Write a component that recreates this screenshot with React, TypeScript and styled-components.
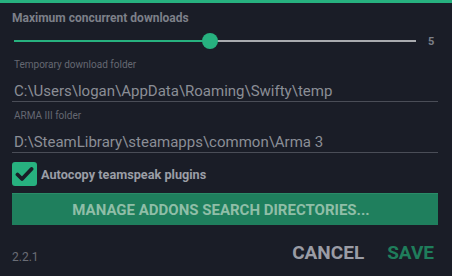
import React, { useState } from 'react';
import styled, { createGlobalStyle } from 'styled-components';

const GlobalStyle = createGlobalStyle`
  html, body {
    margin: 0;
    padding: 0;
    background: #1a1d27;
  }

  body {
    font-family: Roboto, "Liberation Sans", sans-serif;
  }
`;

// slider scale
const MIN = 1;
const MAX = 9.2;

export default function App() {
  const [downloads] = useState(5);
  const [autocopy] = useState(true);
  const percent = ((downloads - MIN) / (MAX - MIN)) * 100;

  return (
    <>
      <GlobalStyle />
      <Settings>
        <SectionTitle>Maximum concurrent downloads</SectionTitle>

        <SliderRow>
          <Track>
            <TrackFill style={ { width: percent + '%' } } />
            <Thumb style={ { left: percent + '%' } } />
          </Track>
          <SliderValue>{ downloads }</SliderValue>
        </SliderRow>

        <FieldLabel>Temporary download folder</FieldLabel>
        <FieldInput>C:\Users\logan\AppData\Roaming\Swifty\temp</FieldInput>

        <FieldLabel $gap={ 8 }>ARMA III folder</FieldLabel>
        <FieldInput>D:\SteamLibrary\steamapps\common\Arma 3</FieldInput>

        <CheckRow>
          <CheckBox $checked={ autocopy }>
            { autocopy && (
              <svg width="19" height="16" viewBox="0 0 19 16">
                <path d="M2.5 8.5 L7 13 L16.5 3" fill="none" stroke="#1a1d27" strokeWidth="3.8" strokeLinecap="round" strokeLinejoin="round" />
              </svg>
            ) }
          </CheckBox>
          <CheckLabel>Autocopy teamspeak plugins</CheckLabel>
        </CheckRow>

        <WideButton>Manage addons search directories...</WideButton>

        <Footer>
          <Version>2.2.1</Version>
          <Actions>
            <TextButton>Cancel</TextButton>
            <TextButton $primary>Save</TextButton>
          </Actions>
        </Footer>
      </Settings>
    </>
  );
}

const Settings = styled.div`
  border-top: 3px solid #27b17f;
  padding: 8px 14px 0 12px;
  box-sizing: border-box;
  height: 276px;
  display: flex;
  flex-direction: column;
`;

const SectionTitle = styled.div`
  font-size: 12px;
  font-weight: 700;
  line-height: 14px;
  color: #7d8089;
`;

const SliderRow = styled.div`
  display: flex;
  align-items: center;
  height: 16px;
  margin-top: 8px;
  padding-left: 2px;
`;

const Track = styled.div`
  position: relative;
  flex: 1;
  height: 2px;
  background: #a9abaf;
`;

const TrackFill = styled.div`
  height: 100%;
  background: #27b17f;
`;

const Thumb = styled.div`
  position: absolute;
  top: 50%;
  width: 16px;
  height: 16px;
  border-radius: 50%;
  background: #27b17f;
  transform: translate(-50%, -50%);
`;

const SliderValue = styled.span`
  width: 10px;
  padding-left: 12px;
  font-size: 11px;
  font-weight: 700;
  color: #7d8089;
`;

const FieldLabel = styled.div<{ $gap?: number }>`
  margin-top: ${ p => p.$gap ?? 10 }px;
  padding-left: 2px;
  font-size: 10px;
  line-height: 12px;
  color: #656872;
`;

const FieldInput = styled.div`
  margin-top: 10px;
  height: 20px;
  padding-left: 2px;
  line-height: 20px;
  font-size: 15px;
  color: #8b8e96;
  border-bottom: 1px solid #4a4d57;
  white-space: nowrap;
`;

const CheckRow = styled.div`
  display: flex;
  align-items: center;
  gap: 4px;
  margin-top: 9px;
  height: 24px;
`;

const CheckBox = styled.div<{ $checked: boolean }>`
  width: 25px;
  height: 24px;
  border-radius: 3px;
  background: ${ p => p.$checked ? '#27b17f' : 'transparent' };
  border: ${ p => p.$checked ? 'none' : '2px solid #7d8089' };
  box-sizing: border-box;
  display: flex;
  align-items: center;
  justify-content: center;
`;

const CheckLabel = styled.span`
  font-size: 12.7px;
  font-weight: 700;
  color: #9b9ea6;
`;

const WideButton = styled.button`
  margin-top: 7px;
  height: 32px;
  border: none;
  border-top: 1px solid #2a8c68;
  background: #1f7f5d;
  color: #8fbea7;
  font-family: Roboto, "Liberation Sans", sans-serif;
  font-size: 15px;
  font-weight: 700;
  text-transform: uppercase;
  padding: 0 8px 0 0;
`;

const Footer = styled.div`
  flex: 1;
  display: flex;
  align-items: flex-end;
  justify-content: space-between;
  padding-bottom: 12px;
`;

const Version = styled.span`
  font-size: 12px;
  line-height: 14px;
  color: #6a6d76;
`;

const Actions = styled.div`
  display: flex;
  gap: 23px;
  margin-bottom: 1px;
  padding-right: 4px;
`;

const TextButton = styled.span<{ $primary?: boolean }>`
  font-size: 19px;
  font-weight: 700;
  line-height: 20px;
  text-transform: uppercase;
  color: ${ p => p.$primary ? '#1f7d5b' : '#9a9ca5' };
`;
